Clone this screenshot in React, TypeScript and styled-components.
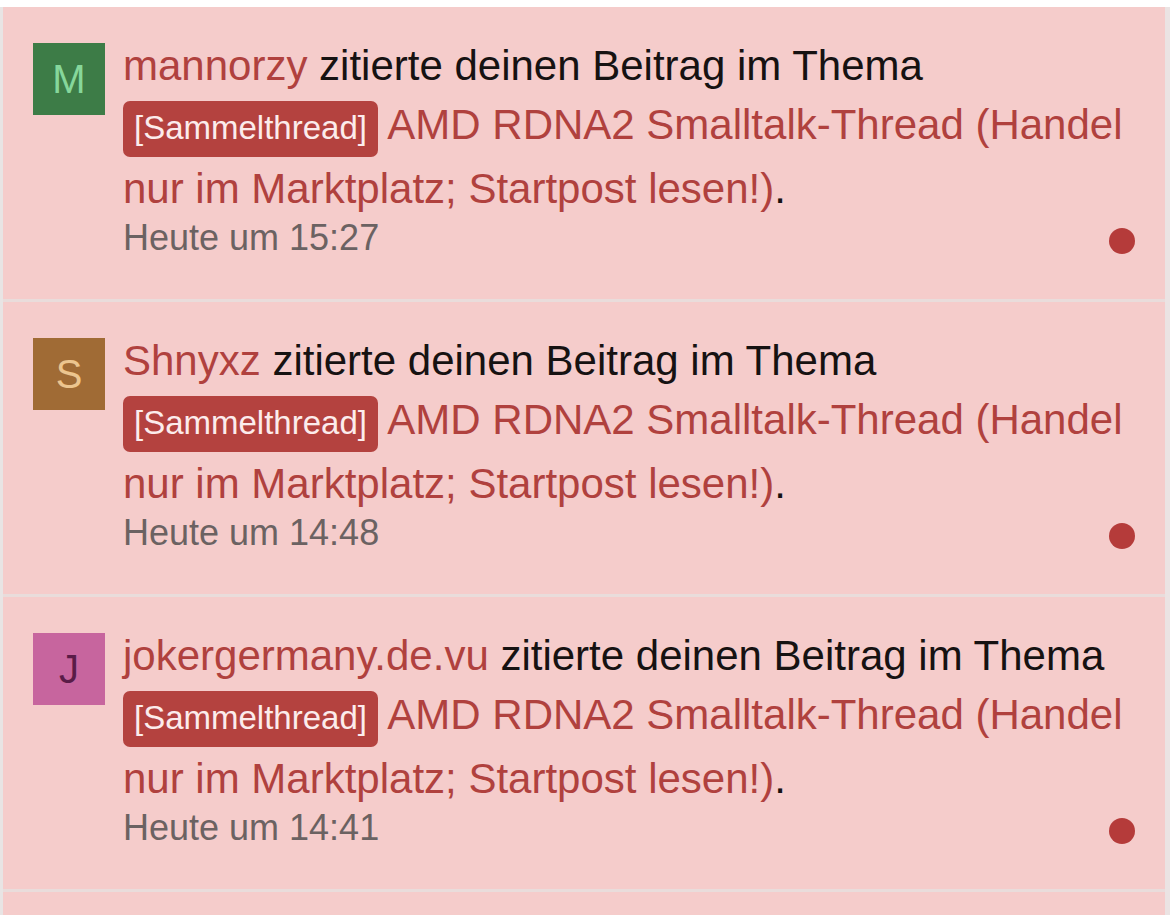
import React from 'react';
import styled, { createGlobalStyle } from 'styled-components';

type Alert = {
  user: string;
  initial: string;
  avatarBg: string;
  avatarFg: string;
  time: string;
};

const alerts: Alert[] = [
  { user: 'mannorzy', initial: 'M', avatarBg: '#3d7c47', avatarFg: '#86d79b', time: 'Heute um 15:27' },
  { user: 'Shnyxz', initial: 'S', avatarBg: '#a06b35', avatarFg: '#ecc58f', time: 'Heute um 14:48' },
  { user: 'jokergermany.de.vu', initial: 'J', avatarBg: '#c7659e', avatarFg: '#5a1c47', time: 'Heute um 14:41' },
  { user: '', initial: '', avatarBg: 'transparent', avatarFg: 'transparent', time: '' },
];

const App: React.FC = () => {
  return (
    <>
      <GlobalStyle />
      <Page>
        <List>
          {alerts.map((a, i) =>
            a.user ? (
              <Row key={i}>
                <Avatar $bg={a.avatarBg} $fg={a.avatarFg}>{a.initial}</Avatar>
                <Main>
                  <Title>
                    <UserLink>{a.user}</UserLink> zitierte deinen Beitrag im Thema{' '}
                    <Label>[Sammelthread]</Label>{' '}
                    <ThreadLink>AMD RDNA2 Smalltalk-Thread (Handel nur im Marktplatz; Startpost lesen!)</ThreadLink>.
                  </Title>
                  <Meta>
                    <Time>{a.time}</Time>
                    <UnreadDot />
                  </Meta>
                </Main>
              </Row>
            ) : (
              <EmptyRow key={i} />
            )
          )}
        </List>
      </Page>
    </>
  );
};

export default App;

const GlobalStyle = createGlobalStyle`
  html, body {
    margin: 0;
    padding: 0;
    background: #ffffff;
  }
  body {
    font-family: "Liberation Sans", Arial, Helvetica, sans-serif;
    overflow: hidden;
  }
`;

const Page = styled.div`
  width: 1170px;
  height: 915px;
  overflow: hidden;
  padding-top: 7px;
  box-sizing: border-box;
  background: #ffffff;
`;

const List = styled.div`
  display: flex;
  flex-direction: column;
  border-left: 3px solid #e8e4e4;
  border-right: 5px solid #ebe3e3;
`;

const Row = styled.div`
  display: flex;
  align-items: flex-start;
  gap: 18px;
  padding: 29px 29px 41px 30px;
  background: #f5cccb;
  border-bottom: 3px solid #e9dcdb;
`;

const EmptyRow = styled.div`
  height: 60px;
  background: #f5cccb;
`;

const Avatar = styled.div<{ $bg: string; $fg: string }>`
  flex: 0 0 72px;
  width: 72px;
  height: 72px;
  margin-top: 7px;
  display: flex;
  align-items: center;
  justify-content: center;
  background: ${(p) => p.$bg};
  color: ${(p) => p.$fg};
  font-size: 40px;
  line-height: 1;
`;

const Main = styled.div`
  flex: 1;
  min-width: 0;
  display: flex;
  flex-direction: column;
`;

const Title = styled.div`
  font-size: 42px;
  line-height: 59px;
  color: #161212;
`;

const UserLink = styled.span`
  color: #b0413e;
`;

const ThreadLink = styled.span`
  color: #b0413e;
`;

const Label = styled.span`
  display: inline-block;
  vertical-align: baseline;
  height: 56px;
  margin-bottom: 2px;
  line-height: 54px;
  padding: 0 11px;
  border-radius: 7px;
  background: #b4423f;
  color: #fcecec;
  font-size: 33px;
  box-sizing: border-box;
`;

const Meta = styled.div`
  display: flex;
  align-items: center;
  justify-content: space-between;
  height: 40px;
`;

const Time = styled.span`
  font-size: 36px;
  line-height: 40px;
  color: #6b6262;
`;

const UnreadDot = styled.span`
  width: 26px;
  height: 26px;
  margin-top: 6px;
  margin-right: 1px;
  border-radius: 50%;
  background: #b53b3a;
`;
